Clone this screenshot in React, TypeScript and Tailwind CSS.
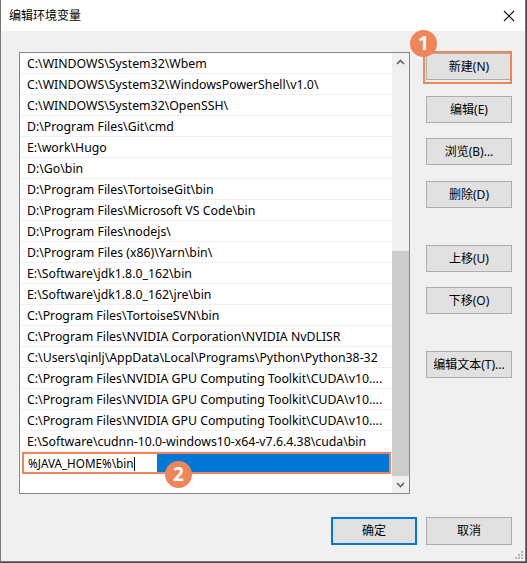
import React from "react";

const rows = [
  "C:\\WINDOWS\\System32\\Wbem",
  "C:\\WINDOWS\\System32\\WindowsPowerShell\\v1.0\\",
  "C:\\WINDOWS\\System32\\OpenSSH\\",
  "D:\\Program Files\\Git\\cmd",
  "E:\\work\\Hugo",
  "D:\\Go\\bin",
  "D:\\Program Files\\TortoiseGit\\bin",
  "D:\\Program Files\\Microsoft VS Code\\bin",
  "D:\\Program Files\\nodejs\\",
  "D:\\Program Files (x86)\\Yarn\\bin\\",
  "E:\\Software\\jdk1.8.0_162\\bin",
  "E:\\Software\\jdk1.8.0_162\\jre\\bin",
  "C:\\Program Files\\TortoiseSVN\\bin",
  "C:\\Program Files\\NVIDIA Corporation\\NVIDIA NvDLISR",
  "C:\\Users\\qinlj\\AppData\\Local\\Programs\\Python\\Python38-32",
  "C:\\Program Files\\NVIDIA GPU Computing Toolkit\\CUDA\\v10....",
  "C:\\Program Files\\NVIDIA GPU Computing Toolkit\\CUDA\\v10....",
  "C:\\Program Files\\NVIDIA GPU Computing Toolkit\\CUDA\\v10....",
  "E:\\Software\\cudnn-10.0-windows10-x64-v7.6.4.38\\cuda\\bin",
];

function Btn({ label, className = "" }: { label: string; className?: string }) {
  return (
    <div
      className={`w-[86px] h-[27px] bg-[#e1e1e1] border border-[#adadad] flex items-center justify-center text-[12px] text-black ${className}`}
    >
      {label}
    </div>
  );
}

function Badge({ n, className }: { n: string; className: string }) {
  return (
    <div
      className={`absolute w-[27px] h-[27px] rounded-full bg-[#f0855a] text-white flex items-center justify-center text-[19px] font-bold ${className}`}
    >
      {n}
    </div>
  );
}

export default function App() {
  return (
    <div className="w-[527px] h-[563px] bg-[#4a4a4a] font-['Noto_Sans','Noto_Sans_CJK_SC',sans-serif]">
      <div className="relative w-[526px] h-[562px] bg-[#f0f0f0] border-l border-r border-b border-[#777777] flex flex-col">
        {/* title bar */}
        <div className="h-[31px] bg-white flex items-center justify-between pl-[8px] pr-[8px]">
          <span className="text-[12px] text-black">编辑环境变量</span>
          <svg width="12" height="12" viewBox="0 0 12 12" className="mr-[2px]">
            <path d="M1 1 L11 11 M11 1 L1 11" stroke="#111" strokeWidth="1.1" />
          </svg>
        </div>

        {/* body */}
        <div className="flex pl-[18px] pt-[21px] pr-[13px]">
          {/* list box */}
          <div className="w-[391px] h-[442px] bg-white border border-[#828790] flex">
            <div className="flex-1 flex flex-col overflow-hidden">
              {rows.map((r, i) => (
                <div
                  key={i}
                  className="h-[21px] border-b border-[#f0f0f0] pl-[7px] pr-[4px] pt-[3px] flex items-center text-[12.3px] text-black whitespace-nowrap overflow-hidden"
                >
                  {r}
                </div>
              ))}
              <div className="h-[22px] ml-[2px] w-[369px] border-2 border-[#f0855a] flex">
                <div className="w-[133px] h-full bg-white flex items-center pl-[4px] pt-[1px] text-[11.7px] text-black whitespace-nowrap">
                  %JAVA_HOME%\bin
                  <span className="inline-block w-[1px] h-[14px] bg-black ml-[1px]" />
                </div>
                <div className="flex-1 bg-[#0078d7]" />
              </div>
            </div>
            {/* scrollbar */}
            <div className="w-[17px] bg-[#f0f0f0] flex flex-col">
              <div className="h-[17px] flex items-center justify-center">
                <svg width="9" height="6" viewBox="0 0 9 6">
                  <path d="M1 5 L4.5 1.5 L8 5" stroke="#606060" strokeWidth="1.6" fill="none" />
                </svg>
              </div>
              <div className="flex-1 flex flex-col">
                <div className="h-[181px]" />
                <div className="h-[225px] bg-[#cdcdcd]" />
              </div>
              <div className="h-[17px] flex items-center justify-center">
                <svg width="9" height="6" viewBox="0 0 9 6">
                  <path d="M1 1 L4.5 4.5 L8 1" stroke="#606060" strokeWidth="1.6" fill="none" />
                </svg>
              </div>
            </div>
          </div>

          {/* buttons column */}
          <div className="ml-[16px] mt-[1px] flex flex-col">
            <Btn label="新建(N)" />
            <Btn label="编辑(E)" className="mt-[16px]" />
            <Btn label="浏览(B)..." className="mt-[15px]" />
            <Btn label="删除(D)" className="mt-[16px]" />
            <Btn label="上移(U)" className="mt-[37px]" />
            <Btn label="下移(O)" className="mt-[15px]" />
            <Btn label="编辑文本(T)..." className="mt-[37px]" />
          </div>
        </div>

        {/* bottom buttons */}
        <div className="flex justify-end gap-[9px] pr-[13px] mt-[23px]">
          <div className="w-[86px] h-[28px] bg-[#e1e1e1] border-2 border-[#0078d7] flex items-center justify-center text-[12px] text-black">
            确定
          </div>
          <Btn label="取消" className="h-[28px]" />
        </div>

        {/* resize grip */}
        <svg width="8" height="8" viewBox="0 0 8 8" className="absolute right-[2px] bottom-[2px]">
          <rect x="6" y="0" width="2" height="2" fill="#b4b4b4" />
          <rect x="3" y="3" width="2" height="2" fill="#b4b4b4" />
          <rect x="6" y="3" width="2" height="2" fill="#b4b4b4" />
          <rect x="0" y="6" width="2" height="2" fill="#b4b4b4" />
          <rect x="3" y="6" width="2" height="2" fill="#b4b4b4" />
          <rect x="6" y="6" width="2" height="2" fill="#b4b4b4" />
        </svg>

        {/* annotations */}
        <div className="absolute left-[422px] top-[51px] w-[89px] h-[33px] border-2 border-[#f0855a]" />
        <Badge n="1" className="left-[409px] top-[30px]" />
        <Badge n="2" className="left-[164px] top-[461px]" />
      </div>
    </div>
  );
}
